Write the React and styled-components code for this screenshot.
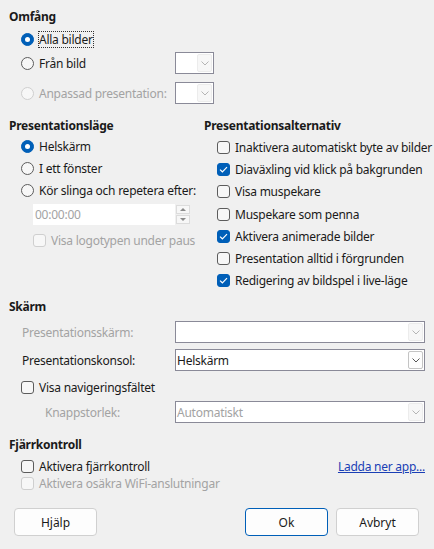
import React from "react";
import styled, { createGlobalStyle } from "styled-components";

const GlobalStyle = createGlobalStyle`
  html, body {
    margin: 0;
    padding: 0;
    background: #f0f0f0;
  }
  body {
    font-family: "Noto Sans", "Open Sans", sans-serif;
    font-size: 12px;
    letter-spacing: -0.25px;
    color: #1a1a1a;
  }
`;

const Dialog = styled.div`
  width: 434px;
  height: 549px;
  box-sizing: border-box;
  padding: 7px 9px 0 9px;
  display: flex;
  flex-direction: column;
`;

const Heading = styled.div`
  height: 20px;
  line-height: 20px;
  font-weight: bold;
  margin-top: ${(p) => p.top || 0}px;
`;

const Row = styled.div`
  display: flex;
  align-items: center;
  height: ${(p) => p.h || 22}px;
  margin-top: ${(p) => p.top || 0}px;
  padding-left: ${(p) => p.indent || 0}px;
`;

const Option = styled.label`
  display: flex;
  align-items: center;
  gap: 5px;
  width: ${(p) => (p.w ? `${p.w}px` : "auto")};
  flex: none;
  color: ${(p) => (p.disabled ? "#a3a3a3" : "#1a1a1a")};
  white-space: nowrap;
`;

const OptionText = styled.span`
  outline: ${(p) => (p.focus ? "1px dotted #333" : "none")};
  outline-offset: 0;
  line-height: 15px;
`;

const RadioDot = styled.span`
  width: 13px;
  height: 13px;
  box-sizing: border-box;
  border-radius: 50%;
  flex: none;
  display: flex;
  align-items: center;
  justify-content: center;
  background: ${(p) => (p.checked ? "#005fb8" : "#f7f7f7")};
  border: 1px solid
    ${(p) => (p.checked ? "#005fb8" : p.disabled ? "#cfcfcf" : "#5c5c5c")};
  &::after {
    content: "";
    display: ${(p) => (p.checked ? "block" : "none")};
    width: 5px;
    height: 5px;
    border-radius: 50%;
    background: #fff;
  }
`;

const CheckBox = styled.span`
  width: 13px;
  height: 13px;
  box-sizing: border-box;
  border-radius: 3px;
  flex: none;
  display: flex;
  align-items: center;
  justify-content: center;
  background: ${(p) => (p.checked ? "#005fb8" : "#f7f7f7")};
  border: 1px solid
    ${(p) => (p.checked ? "#005fb8" : p.disabled ? "#cfcfcf" : "#5c5c5c")};
`;

const Radio = ({ checked, disabled, focus, w, children }) => (
  <Option disabled={disabled} w={w}>
    <RadioDot checked={checked} disabled={disabled} />
    <OptionText focus={focus}>{children}</OptionText>
  </Option>
);

const Check = ({ checked, disabled, children }) => (
  <Option disabled={disabled}>
    <CheckBox checked={checked} disabled={disabled}>
      {checked && (
        <svg width="9" height="7" viewBox="0 0 9 7">
          <path d="M1 3.6 L3.4 5.8 L8 1.2" fill="none" stroke="#fff" strokeWidth="1.2" />
        </svg>
      )}
    </CheckBox>
    <OptionText>{children}</OptionText>
  </Option>
);

const ComboBox = styled.div`
  display: flex;
  align-items: stretch;
  box-sizing: border-box;
  width: ${(p) => p.w}px;
  height: 22px;
  border: 1px solid #8a8a98;
  background: #fff;
`;

const ComboText = styled.div`
  flex: 1;
  display: flex;
  align-items: center;
  padding-left: 1px;
  color: ${(p) => (p.disabled ? "#a3a3a3" : "#1a1a1a")};
`;

const ComboButton = styled.div`
  width: 15px;
  margin: 1px;
  box-sizing: border-box;
  display: flex;
  align-items: center;
  justify-content: center;
  background: ${(p) => (p.active ? "#fdfdfd" : "#f7f7f7")};
  border: 1px solid ${(p) => (p.active ? "#c4c4c4" : "#ececec")};
  border-radius: 2px;
`;

const Combo = ({ w, value, disabled, active }) => (
  <ComboBox w={w}>
    <ComboText disabled={disabled}>{value}</ComboText>
    <ComboButton active={active}>
      <svg width="8" height="5" viewBox="0 0 8 5">
        <path d="M0.5 0.5 L4 4 L7.5 0.5" fill="none" stroke={active ? "#555" : "#b5b5b5"} strokeWidth="1" />
      </svg>
    </ComboButton>
  </ComboBox>
);

const Columns = styled.div`
  display: grid;
  grid-template-columns: 195px 1fr;
  margin-top: 12px;
`;

const Column = styled.div`
  display: flex;
  flex-direction: column;
`;

const CheckList = styled.div`
  display: flex;
  flex-direction: column;
  padding-left: 13px;
  & > div {
    height: 22.3px;
  }
`;

const ListItem = styled.div`
  display: flex;
  align-items: center;
`;

const SpinField = styled.div`
  display: flex;
  align-items: stretch;
  height: 21px;
  width: 157px;
  margin-left: 24px;
  margin-top: 3px;
`;

const SpinInput = styled.div`
  flex: 1;
  background: #fff;
  color: #a3a3a3;
  display: flex;
  align-items: center;
  padding-left: 2px;
`;

const SpinButtons = styled.div`
  width: 14px;
  margin-left: 1px;
  display: flex;
  flex-direction: column;
  justify-content: center;
  gap: 1px;
  padding: 1px 0;
  box-sizing: border-box;
`;

const SpinHalf = styled.div`
  flex: 1;
  background: #f7f7f7;
  border: 1px solid #dcdcdc;
  display: flex;
  align-items: center;
  justify-content: center;
`;

const FieldLabel = styled.div`
  width: ${(p) => p.w}px;
  padding-left: ${(p) => p.indent || 0}px;
  box-sizing: border-box;
  color: ${(p) => (p.disabled ? "#a3a3a3" : "#1a1a1a")};
  flex: none;
`;

const Spread = styled(Row)`
  justify-content: space-between;
`;

const Link = styled.a`
  color: #1a3fb5;
  text-decoration: underline;
  cursor: pointer;
`;

const ButtonBar = styled.div`
  display: flex;
  align-items: center;
  margin-top: 19px;
  padding: 0 6px 0 5px;
`;

const Button = styled.button`
  width: 83px;
  height: 28px;
  font: inherit;
  color: #1a1a1a;
  background: #fdfdfd;
  border: 1px solid ${(p) => (p.primary ? "#005fb8" : "#d0d0d0")};
  border-radius: 4px;
  margin-left: ${(p) => p.gap || 0}px;
`;

const Spacer = styled.div`
  flex: 1;
`;

export default function App() {
  return (
    <>
      <GlobalStyle />
      <Dialog>
        <Heading>Omfång</Heading>
        <Row indent={12} top={1}>
          <Radio checked focus>Alla bilder</Radio>
        </Row>
        <Row indent={12} top={2}>
          <Radio w={154}>Från bild</Radio>
          <Combo w={39} />
        </Row>
        <Row indent={12} top={8}>
          <Radio disabled w={154}>Anpassad presentation:</Radio>
          <Combo w={39} />
        </Row>

        <Columns>
          <Column>
            <Heading>Presentationsläge</Heading>
            <Row indent={12} top={-1}>
              <Radio checked>Helskärm</Radio>
            </Row>
            <Row indent={12}>
              <Radio>I ett fönster</Radio>
            </Row>
            <Row indent={12}>
              <Radio>Kör slinga och repetera efter:</Radio>
            </Row>
            <SpinField>
              <SpinInput>00:00:00</SpinInput>
              <SpinButtons>
                <SpinHalf>
                  <svg width="6" height="3" viewBox="0 0 6 3">
                    <path d="M0 3 L3 0 L6 3 Z" fill="#8a8a8a" />
                  </svg>
                </SpinHalf>
                <SpinHalf>
                  <svg width="6" height="3" viewBox="0 0 6 3">
                    <path d="M0 0 L3 3 L6 0 Z" fill="#8a8a8a" />
                  </svg>
                </SpinHalf>
              </SpinButtons>
            </SpinField>
            <Row indent={24} top={4}>
              <Check disabled>Visa logotypen under paus</Check>
            </Row>
          </Column>
          <Column>
            <Heading>Presentationsalternativ</Heading>
            <CheckList>
              <ListItem><Check>Inaktivera automatiskt byte av bilder</Check></ListItem>
              <ListItem><Check checked>Diaväxling vid klick på bakgrunden</Check></ListItem>
              <ListItem><Check>Visa muspekare</Check></ListItem>
              <ListItem><Check>Muspekare som penna</Check></ListItem>
              <ListItem><Check checked>Aktivera animerade bilder</Check></ListItem>
              <ListItem><Check>Presentation alltid i förgrunden</Check></ListItem>
              <ListItem><Check checked>Redigering av bildspel i live-läge</Check></ListItem>
            </CheckList>
          </Column>
        </Columns>

        <Heading top={5}>Skärm</Heading>
        <Row top={4}>
          <FieldLabel w={166} indent={13} disabled>Presentationsskärm:</FieldLabel>
          <Combo w={250} />
        </Row>
        <Row top={6}>
          <FieldLabel w={166} indent={13}>Presentationskonsol:</FieldLabel>
          <Combo w={250} value="Helskärm" active />
        </Row>
        <Row indent={12} top={5}>
          <Check>Visa navigeringsfältet</Check>
        </Row>
        <Row top={3}>
          <FieldLabel w={166} indent={36} disabled>Knappstorlek:</FieldLabel>
          <Combo w={250} value="Automatiskt" disabled />
        </Row>

        <Heading top={12}>Fjärrkontroll</Heading>
        <Spread indent={12} h={22}>
          <Check>Aktivera fjärrkontroll</Check>
          <Link>Ladda ner app...</Link>
        </Spread>
        <Row indent={12} h={12} top={0}>
          <Check disabled>Aktivera osäkra WiFi-anslutningar</Check>
        </Row>

        <ButtonBar>
          <Button>Hjälp</Button>
          <Spacer />
          <Button primary>Ok</Button>
          <Button gap={8}>Avbryt</Button>
        </ButtonBar>
      </Dialog>
    </>
  );
}
